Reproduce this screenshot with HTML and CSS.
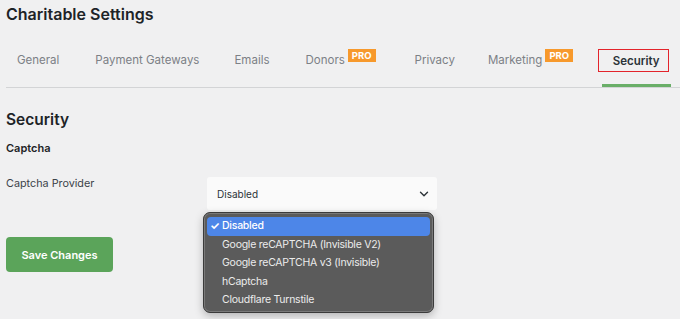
FILE: index.html
```html
<!DOCTYPE html>
<html lang="en">
<head>
  <meta charset="UTF-8" />
  <title>Charitable Settings</title>
  <link rel="stylesheet" href="styles.css">
</head>
<body>
  <div class="wrap">
    <h1 class="page-title">Charitable Settings</h1>

    <!-- Tabs -->
    <nav class="tabs">
      <a class="tab">General</a>
      <a class="tab">Payment Gateways</a>
      <a class="tab">Emails</a>
      <a class="tab has-pro">Donors<span class="pro">PRO</span></a>
      <a class="tab">Privacy</a>
      <a class="tab has-pro">Marketing<span class="pro">PRO</span></a>
      <a class="tab active"><span class="highlight-box">Security</span></a>
    </nav>

    <h2 class="section-title">Security</h2>
    <h3 class="group-title">Captcha</h3>

    <div class="field-row">
      <label class="field-label">Captcha Provider</label>
      <div class="select-wrap">
        <div class="select">
          <span>Disabled</span>
          <svg class="chevron" width="10" height="6" viewBox="0 0 10 6"><path d="M1.5 1.2l3.5 3.5 3.5-3.5" fill="none" stroke="#2c3338" stroke-width="1.4" stroke-linecap="round" stroke-linejoin="round"/></svg>
        </div>
        <ul class="menu">
          <li class="selected"><span class="check">✓</span>Disabled</li>
          <li>Google reCAPTCHA (Invisible V2)</li>
          <li>Google reCAPTCHA v3 (Invisible)</li>
          <li>hCaptcha</li>
          <li>Cloudflare Turnstile</li>
        </ul>
      </div>
    </div>

    <button class="save-btn">Save Changes</button>
  </div>
</body>
</html>
```

FILE: styles.css
```css
* {
  box-sizing: border-box;
}

body {
  margin: 0;
  background-color: #f0f0f1;
  font-family: Inter, 'Noto Sans', sans-serif;
  color: #1d2327;
  overflow: hidden;
}

.wrap {
  min-height: 319px;
  padding-left: 6px;
}

.page-title {
  margin: 0;
  padding-top: 3px;
  font-size: 16px;
  line-height: 22px;
  font-weight: 600;
  color: #1d2327;
}

/* Tabs */
.tabs {
  display: flex;
  margin-top: 11px;
  padding-left: 11px;
  border-bottom: 1px solid #d3d4d6;
}

.tab {
  display: flex;
  flex-shrink: 0;
  align-items: flex-start;
  white-space: nowrap;
  padding: 16px 0 16px;
  margin-right: 36px;
  font-size: 11.5px;
  line-height: 16px;
  color: #7c8086;
  border-bottom: 3px solid transparent;
}

.tab:nth-child(2) { margin-right: 35px; }
.tab:nth-child(4) { margin-right: 39px; }
.tab:nth-child(5) { margin-right: 33px; }
.tab:nth-child(6) { margin-right: 29px; }

.pro {
  display: inline-block;
  margin: -3px 0 0 3px;
  padding: 0 4px;
  height: 13px;
  line-height: 13px;
  font-size: 9.5px;
  font-weight: 700;
  color: #fff;
  background-color: #f7992c;
}

.tab.active {
  position: relative;
  margin-right: 0;
  padding: 16px 11px 16px 11px;
  color: #2c3338;
  font-weight: 600;
  border-bottom-color: #6aae68;
}

.highlight-box {
  position: absolute;
  left: -4px;
  top: 13px;
  width: 71px;
  height: 23px;
  border: 1px solid #e3242b;
  display: flex;
  align-items: center;
  justify-content: center;
  padding-left: 5px;
}

.tab.active::before {
  content: "Security";
  visibility: hidden;
}

.section-title {
  margin: 21px 0 0;
  font-size: 15.5px;
  line-height: 22px;
  font-weight: 600;
}

.group-title {
  margin: 9px 0 0;
  font-size: 11px;
  line-height: 16px;
  font-weight: 600;
}

/* Field */
.field-row {
  display: flex;
  margin-top: 21px;
}

.field-label {
  width: 201px;
  font-size: 10.8px;
  line-height: 14px;
  color: #3c434a;
}

.select-wrap {
  position: relative;
}

.select {
  display: flex;
  align-items: center;
  justify-content: space-between;
  width: 230px;
  height: 33px;
  padding: 0 8px 0 10px;
  background-color: #fafafa;
  border-radius: 3px;
  font-size: 10px;
  color: #2c3338;
}

.chevron {
  margin-top: 1px;
}

.menu {
  position: absolute;
  left: -4px;
  top: 35px;
  width: 231px;
  height: 101px;
  margin: 0;
  padding: 4px 3px;
  list-style: none;
  background-color: #5b5b5b;
  border: 1px solid #3b3b3b;
  box-shadow: inset 0 0 0 1px #7a7a7a, 0 3px 8px rgba(0, 0, 0, 0.25);
  border-radius: 7px;
  font-size: 10.5px;
  letter-spacing: -0.25px;
  color: #ececec;
}

.menu li {
  height: 18.5px;
  line-height: 18.5px;
  padding-left: 15px;
  position: relative;
}

.menu li.selected {
  background-color: #4d86e8;
  border-radius: 4px;
  color: #fff;
  font-weight: 500;
}

.check {
  position: absolute;
  left: 3px;
  font-size: 11px;
  font-weight: 700;
}

.save-btn {
  display: block;
  margin-top: 27px;
  width: 107px;
  height: 35px;
  border: none;
  border-radius: 4px;
  background-color: #5ba45a;
  color: #fff;
  font-family: Inter, 'Noto Sans', sans-serif;
  font-size: 11px;
  font-weight: 600;
}
```
